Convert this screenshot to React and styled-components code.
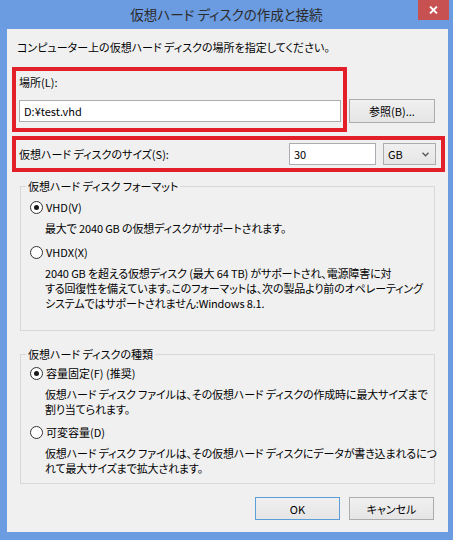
import React from "react";
import styled, { createGlobalStyle } from "styled-components";

const Global = createGlobalStyle`
  html, body { margin: 0; padding: 0; background: #6b9be0; }
  body {
    font-family: "Noto Sans CJK JP", "Noto Sans", sans-serif;
    font-size: 11px;
    color: #000;
  }
  * { box-sizing: border-box; }
`;

const Frame = styled.div`
  width: 453px;
  height: 540px;
  background: #6b9be0;
  display: flex;
  flex-direction: column;
  overflow: hidden;
  font-feature-settings: "palt";
`;

const TitleBar = styled.div`
  height: 29px;
  flex: none;
  display: grid;
  grid-template-columns: 1fr auto 1fr;
  align-items: start;
`;

const Title = styled.div`
  grid-column: 2;
  font-size: 13.5px;
  line-height: 29px;
  color: #2b2b2b;
  white-space: nowrap;
`;

const CloseButton = styled.div`
  grid-column: 3;
  justify-self: end;
  width: 31px;
  height: 20px;
  margin-right: 4px;
  background: #c75050;
  display: flex;
  align-items: center;
  justify-content: center;
`;

const Client = styled.div`
  flex: 1;
  margin: 0 5px 8px 7px;
  background: #f0f0f0;
  display: flex;
  flex-direction: column;
  padding-top: 10px;
`;

const Instruction = styled.div`
  margin-left: 10px;
  line-height: 16px;
  white-space: nowrap;
`;

const TopRow = styled.div`
  display: flex;
  align-items: flex-end;
  margin: 12px 0 0 5px;
`;

const Highlight = styled.div`
  border: 4px solid #e3202a;
`;

const LocationBox = styled(Highlight)`
  width: 335px;
  height: 65px;
  display: flex;
  flex-direction: column;
  padding: 3px 2px 6px 3px;
`;

const FieldLabel = styled.div`
  line-height: 16px;
  white-space: nowrap;
`;

const TextBox = styled.input`
  height: 22px;
  width: ${(p) => p.$width || "100%"};
  margin-top: ${(p) => p.$top || 0}px;
  border: 1px solid #abadb3;
  background: #fff;
  font: inherit;
  font-size: 11px;
  color: #000;
  padding: 0 0 0 4px;
  outline: none;
`;

const Button = styled.div`
  width: ${(p) => p.$width}px;
  height: ${(p) => p.$height}px;
  border: 1px solid ${(p) => (p.$default ? "#5c9ed8" : "#acacac")};
  background: linear-gradient(#f0f0f0, #e5e5e5);
  display: flex;
  align-items: center;
  justify-content: center;
  line-height: 16px;
  white-space: nowrap;
`;

const BrowseButton = styled(Button)`
  margin: 0 0 9px 2px;
`;

const SizeBox = styled(Highlight)`
  width: 433px;
  height: 36px;
  margin: 4px 0 0 5px;
  display: flex;
  align-items: center;
  padding: 0 5px 0 3px;
`;

const SizeLabel = styled(FieldLabel)`
  flex: 1;
`;

const Combo = styled.div`
  width: 53px;
  height: 22px;
  margin-left: 7px;
  border: 1px solid #acacac;
  background: linear-gradient(#f0f0f0, #e5e5e5);
  display: flex;
  align-items: center;
  justify-content: space-between;
  padding: 0 6px 0 4px;
  line-height: 16px;
`;

const Group = styled.fieldset`
  margin: ${(p) => p.$top}px 0 0 13px;
  width: 415px;
  height: ${(p) => p.$height}px;
  border: 1px solid #d8d8d8;
  padding: 0;
  min-width: 0;
`;

const Legend = styled.legend`
  margin-left: 5px;
  padding: 0 2px;
  line-height: 16px;
  white-space: nowrap;
`;

const RadioRow = styled.div`
  display: flex;
  align-items: center;
  gap: 3px;
  margin: ${(p) => p.$top}px 0 0 9px;
  line-height: 16px;
  white-space: nowrap;
`;

const RadioCircle = styled.span`
  width: 13px;
  height: 13px;
  border: 1px solid #333;
  border-radius: 50%;
  background: #fff;
  display: flex;
  align-items: center;
  justify-content: center;
  flex: none;
  &::after {
    content: "";
    width: 5px;
    height: 5px;
    border-radius: 50%;
    background: ${(p) => (p.$checked ? "#1a1a1a" : "transparent")};
  }
`;

const Desc = styled.div`
  margin: ${(p) => p.$top}px 0 0 24px;
  line-height: 15px;
  letter-spacing: -0.15px;
  white-space: nowrap;
`;

const Footer = styled.div`
  display: flex;
  justify-content: flex-end;
  gap: 9px;
  margin: 13px 14px 0 0;
`;

function Radio({ checked, top, children }) {
  return (
    <RadioRow $top={top}>
      <RadioCircle $checked={checked} />
      <span>{children}</span>
    </RadioRow>
  );
}

function Lines({ top, lines }) {
  return (
    <Desc $top={top}>
      {lines.map((l, i) => (
        <div key={i}>{l}</div>
      ))}
    </Desc>
  );
}

export default function App() {
  return (
    <>
      <Global />
      <Frame>
        <TitleBar>
          <Title>仮想ハード ディスクの作成と接続</Title>
          <CloseButton>
            <svg width="9" height="8" viewBox="0 0 9 8">
              <path d="M1 0.5 L8 7.5 M8 0.5 L1 7.5" stroke="#fff" strokeWidth="1.8" />
            </svg>
          </CloseButton>
        </TitleBar>
        <Client>
          <Instruction>コンピューター上の仮想ハード ディスクの場所を指定してください。</Instruction>
          <TopRow>
            <LocationBox>
              <FieldLabel>場所(L):</FieldLabel>
              <TextBox $top={10} readOnly value="D:¥test.vhd" />
            </LocationBox>
            <BrowseButton $width={86} $height={24}>参照(B)...</BrowseButton>
          </TopRow>
          <SizeBox>
            <SizeLabel>仮想ハード ディスクのサイズ(S):</SizeLabel>
            <TextBox $width="87px" readOnly value="30" />
            <Combo>
              <span>GB</span>
              <svg width="7" height="5" viewBox="0 0 7 5">
                <path d="M0.5 0.8 L3.5 3.8 L6.5 0.8" stroke="#555" strokeWidth="1.3" fill="none" />
              </svg>
            </Combo>
          </SizeBox>
          <Group $top={6} $height={153}>
            <Legend>仮想ハード ディスク フォーマット</Legend>
            <Radio checked top={5}>VHD(V)</Radio>
            <Lines top={6} lines={["最大で 2040 GB の仮想ディスクがサポートされます。"]} />
            <Radio top={8}>VHDX(X)</Radio>
            <Lines
              top={6}
              lines={[
                "2040 GB を超える仮想ディスク (最大 64 TB) がサポートされ、電源障害に対",
                "する回復性を備えています。このフォーマットは、次の製品より前のオペレーティング",
                "システムではサポートされません:Windows 8.1.",
              ]}
            />
          </Group>
          <Group $top={15} $height={138}>
            <Legend>仮想ハード ディスクの種類</Legend>
            <Radio checked top={3}>容量固定(F) (推奨)</Radio>
            <Lines
              top={6}
              lines={[
                "仮想ハード ディスク ファイルは、その仮想ハード ディスクの作成時に最大サイズまで",
                "割り当てられます。",
              ]}
            />
            <Radio top={7}>可変容量(D)</Radio>
            <Lines
              top={6}
              lines={[
                "仮想ハード ディスク ファイルは、その仮想ハード ディスクにデータが書き込まれるにつ",
                "れて最大サイズまで拡大されます。",
              ]}
            />
          </Group>
          <Footer>
            <Button $width={85} $height={23} $default>OK</Button>
            <Button $width={85} $height={23}>キャンセル</Button>
          </Footer>
        </Client>
      </Frame>
    </>
  );
}
